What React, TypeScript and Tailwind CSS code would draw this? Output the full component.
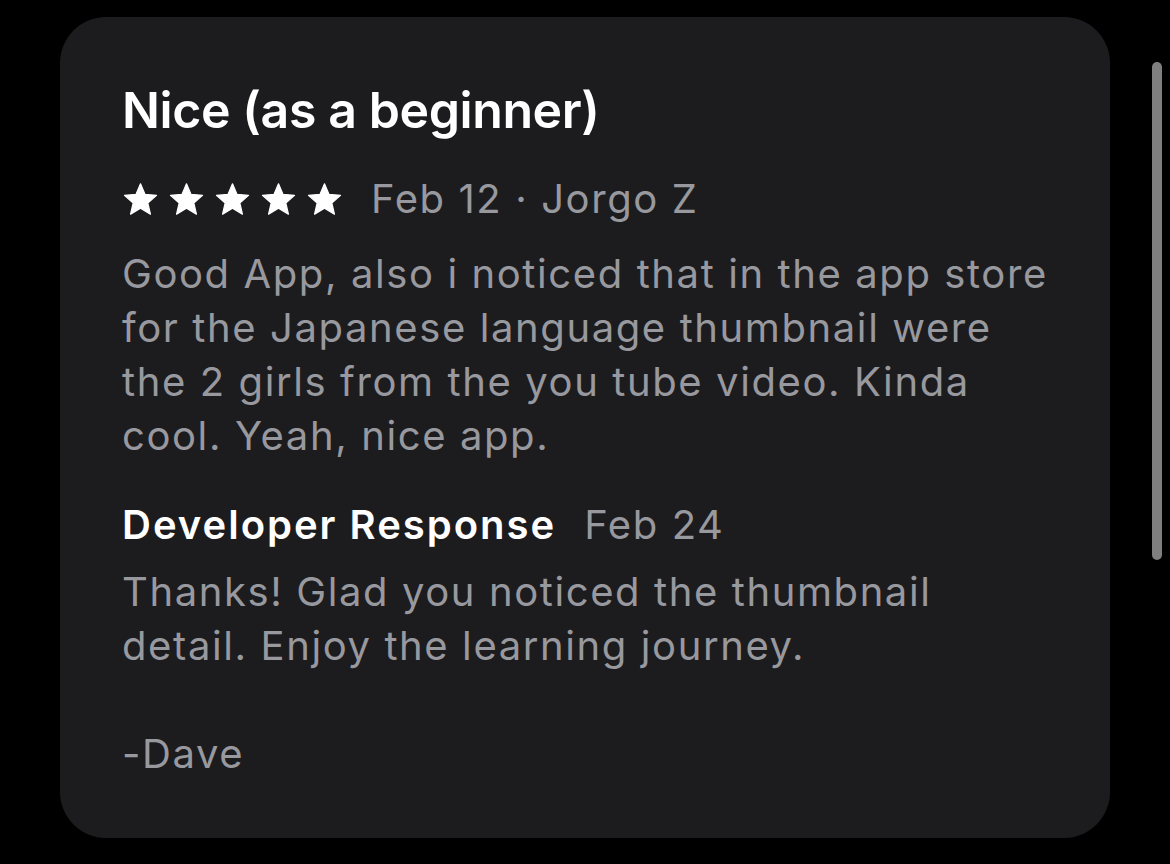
import React from "react";

const review = {
  title: "Nice (as a beginner)",
  date: "Feb 12",
  author: "Jorgo Z",
  body: "Good App, also i noticed that in the app store\nfor the Japanese language thumbnail were\nthe 2 girls from the you tube video. Kinda\ncool. Yeah, nice app.",
  responseDate: "Feb 24",
  response: "Thanks! Glad you noticed the thumbnail\ndetail. Enjoy the learning journey.\n\n-Dave",
};

function Star() {
  return (
    <svg viewBox="0 0 24 24" className="h-[37px] w-[37px]" fill="white">
      <path
        d="M12 1.8l2.95 6.9 7.45.62-5.66 4.9 1.7 7.28L12 17.6l-6.44 3.9 1.7-7.28L1.6 9.32l7.45-.62z"
        strokeLinejoin="round"
        stroke="white"
        strokeWidth="0.8"
      />
    </svg>
  );
}

export default function App() {
  return (
    <div
      className="relative h-[864px] w-full overflow-hidden bg-black"
      style={{ fontFamily: "Inter, 'Noto Sans', sans-serif" }}
    >
      {/* Review card */}
      <div className="ml-[60px] mt-[17px] h-[821px] w-[1050px] rounded-[46px] bg-[#1c1c1e] pl-[62px] pt-[65px]">
        <h1 className="text-[50px] leading-[56px] font-semibold tracking-[-0.4px] text-white">
          {review.title}
        </h1>

        <div className="mt-[34px] flex items-center">
          <div className="flex gap-[9px]">
            {[0, 1, 2, 3, 4].map((i) => (
              <Star key={i} />
            ))}
          </div>
          <span className="ml-[28px] text-[40px] leading-[54px] tracking-[1.6px] text-[#98989f]">
            {review.date} · {review.author}
          </span>
        </div>

        <p className="mt-[21px] whitespace-pre-line text-[40px] leading-[54px] tracking-[1.6px] text-[#98989f]">
          {review.body}
        </p>

        {/* Developer response */}
        <div className="mt-[35px] flex items-baseline">
          <span className="text-[40px] leading-[54px] font-semibold tracking-[2px] text-white">
            Developer Response
          </span>
          <span className="ml-[28px] text-[40px] leading-[54px] tracking-[1.6px] text-[#98989f]">
            {review.responseDate}
          </span>
        </div>
        <p className="mt-[13px] whitespace-pre-line text-[40px] leading-[54px] tracking-[1.6px] text-[#98989f]">
          {review.response}
        </p>
      </div>

      {/* Scroll indicator */}
      <div className="absolute left-[1152px] top-[62px] h-[498px] w-[10px] rounded-full bg-[#7f7f7f]" />
    </div>
  );
}
